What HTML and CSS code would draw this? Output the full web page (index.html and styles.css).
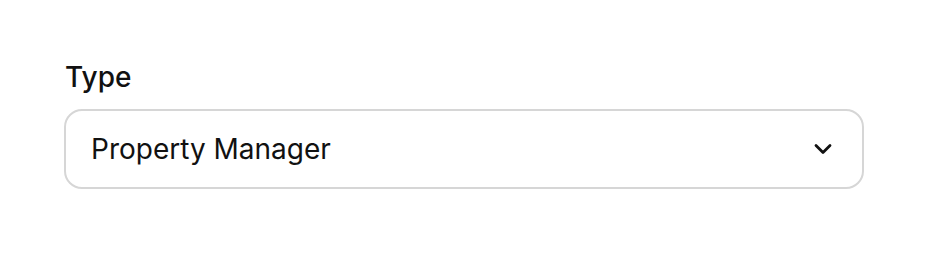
FILE: index.html
```html
<!DOCTYPE html>
<html>
<head>
<meta charset="utf-8">
<link rel="stylesheet" href="styles.css">
</head>
<body>
<div class="field">
  <label class="label">Type</label>
  <div class="select">
    <span class="value">Property Manager</span>
    <svg class="chev" width="20" height="14" viewBox="0 0 20 14"><path d="M3 3.5 L10 10.5 L17 3.5" fill="none" stroke="#111" stroke-width="2.8" stroke-linecap="round" stroke-linejoin="round"/></svg>
  </div>
</div>
</body>
</html>
```
FILE: styles.css
```css
html, body { margin: 0; padding: 0; background: #fff; }
body { font-family: Inter, "Noto Sans", sans-serif; color: #111; }
.field { padding: 58px 64px 0 64px; width: 800px; display: flex; flex-direction: column; gap: 13px; }
.label { font-size: 28px; font-weight: 500; line-height: 38px; padding-left: 1px; }
.select { box-sizing: border-box; height: 80px; border: 2px solid #d6d6d6; border-radius: 18px; display: flex; align-items: center; justify-content: space-between; padding: 0 29px 0 25px; }
.value { font-size: 28px; font-weight: 400; }
.chev { display: block; }
```
